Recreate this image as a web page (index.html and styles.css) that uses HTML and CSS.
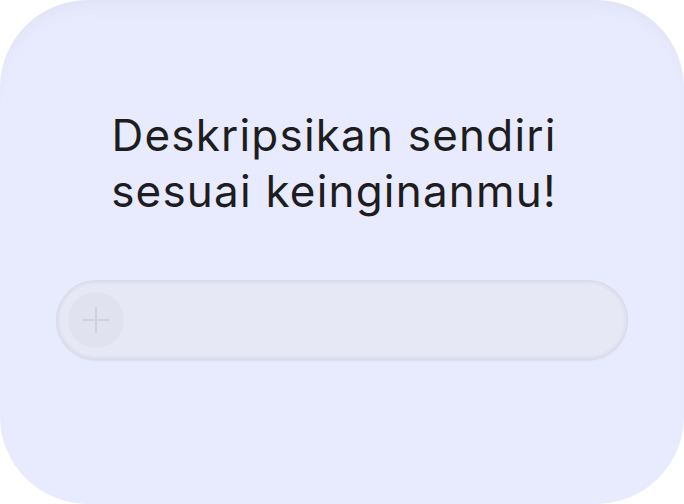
FILE: index.html
```html
<!DOCTYPE html>
<html lang="id">
<head>
<meta charset="utf-8">
<title>Deskripsikan sendiri</title>
<link rel="stylesheet" href="styles.css">
</head>
<body>
<main class="card">
  <h1 class="title">Deskripsikan sendiri<br>sesuai keinginanmu!</h1>
  <div class="field">
    <button class="add" type="button" aria-label="Tambah">
      <svg width="28" height="28" viewBox="0 0 28 28" aria-hidden="true">
        <path d="M14 1v26M1 14h26" stroke="#cfd0e0" stroke-width="2" fill="none"/>
      </svg>
    </button>
  </div>
</main>
</body>
</html>
```
FILE: styles.css
```css
html, body {
  margin: 0;
  padding: 0;
  background: #ffffff;
}
body {
  width: 684px;
  height: 504px;
  overflow: hidden;
  font-family: Inter, "Noto Sans", sans-serif;
}
.card {
  box-sizing: border-box;
  width: 684px;
  height: 504px;
  border-radius: 88px;
  background: #e8eafd;
  box-shadow: inset 0 14px 18px -12px rgba(200,202,225,0.35);
  display: flex;
  flex-direction: column;
  align-items: center;
  padding-top: 107px;
}
.title {
  margin: 0 16px 0 0;
  font-weight: 400;
  font-size: 44px;
  line-height: 56px;
  letter-spacing: 1.2px;
  color: #1d1d20;
  text-align: center;
}
.field {
  box-sizing: border-box;
  margin-top: 61px;
  width: 572px;
  height: 80px;
  border-radius: 40px;
  background: #e7e8f5;
  border: 2px solid #dcdcea;
  box-shadow: inset 0 0 0 2px #e2e3f1, 0 1px 1px rgba(180,180,200,0.25);
  display: flex;
  align-items: center;
  padding-left: 10px;
}
.add {
  width: 56px;
  height: 56px;
  border-radius: 50%;
  border: none;
  padding: 0;
  background: #e1e2ef;
  display: flex;
  align-items: center;
  justify-content: center;
}
```
